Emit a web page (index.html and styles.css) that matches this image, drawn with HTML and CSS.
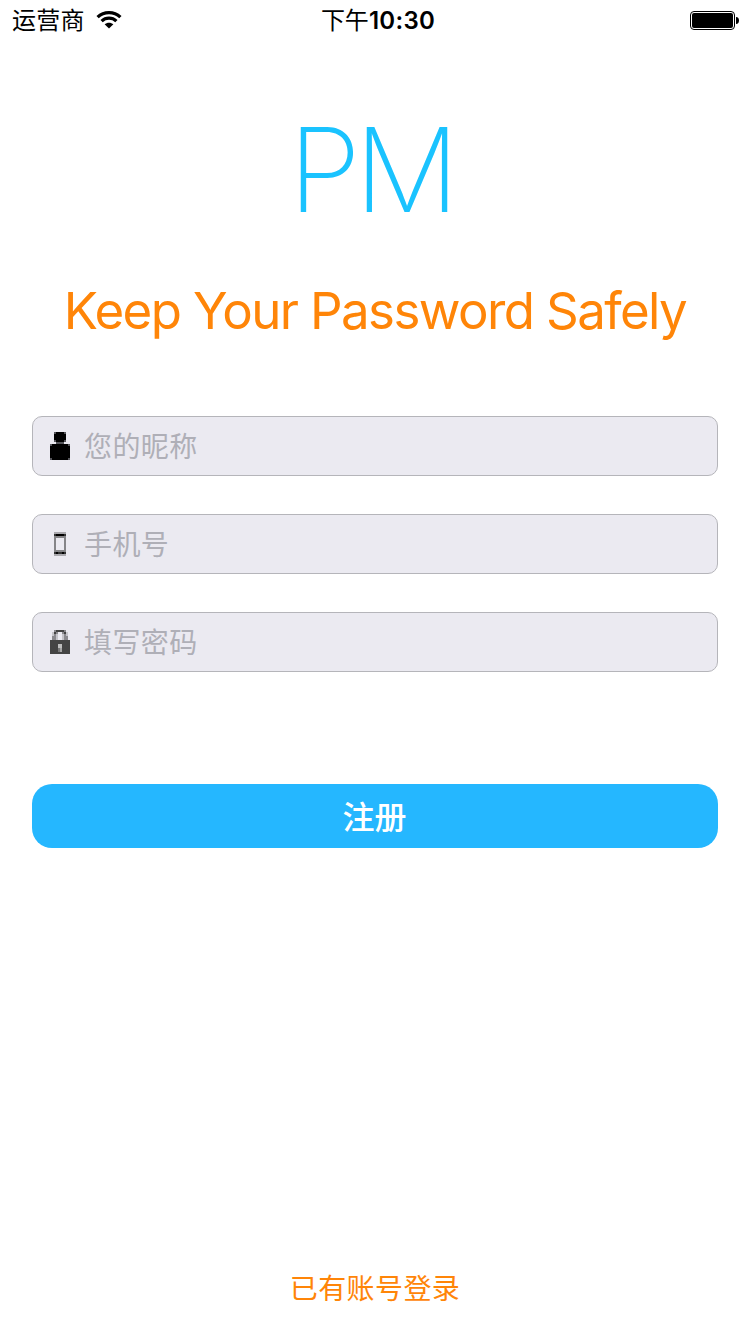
FILE: index.html
```html
<!DOCTYPE html>
<html lang="zh-CN">
<head>
<meta charset="utf-8">
<title>注册</title>
<link rel="stylesheet" href="styles.css">
</head>
<body>
<div class="screen">
  <header class="status">
    <div class="carrier">
      <span>运营商</span>
      <svg class="wifi" width="26" height="20" viewBox="0 0 26 20" fill="none" stroke="#000" stroke-width="3.3">
        <path d="M1.6 7.1C8 1.1 18 1.1 24.4 7.1"/>
        <path d="M5.6 11.1C9.8 7.2 16.2 7.2 20.4 11.1"/>
        <path d="M13 18.6L8.6 14.3C11 12.1 15 12.1 17.4 14.3Z" fill="#000" stroke="none"/>
      </svg>
    </div>
    <div class="clock"><span class="period">下午</span><span class="time">10:30</span></div>
    <svg class="battery" width="49" height="19" viewBox="0 0 49 19">
      <rect x=".5" y=".5" width="44" height="18" rx="3.5" fill="none" stroke="#000"/>
      <rect x="2" y="2" width="41" height="15" rx="2"/>
      <path d="M46 6C48.2 6 49 7.6 49 9.5S48.2 13 46 13Z"/>
    </svg>
  </header>
  <h1 class="logo">PM</h1>
  <p class="tagline">Keep Your Password Safely</p>
  <form class="form">
    <label class="field">
      <svg class="icon" width="20" height="28" viewBox="0 0 10 14" shape-rendering="crispEdges">
        <path fill="#55555a" d="M2 0H8V5H2ZM3 5H7V6H3ZM0 6H10V14H0Z"/>
        <path d="M3 0H7V1H8V4H7V5H3V4H2V1H3ZM1 6H9V7H10V13H9V14H1V13H0V7H1Z"/>
      </svg>
      <input class="input" type="text" placeholder="您的昵称">
    </label>
    <label class="field">
      <svg class="icon" width="20" height="24" viewBox="0 0 10 12" shape-rendering="crispEdges">
        <path fill="#858588" d="M2 0H8V12H2Z"/>
        <path fill="#aaa9ae" d="M2 0H8V1H2ZM2 11H8V12H2Z"/>
        <path fill="#ebeaf1" d="M3 3H7V9H3Z"/>
        <path fill="#000" d="M3 1H7V2H3ZM3 10H4V11H3ZM6 10H7V11H6Z"/>
        <path fill="#333" d="M2 1H3V2H2ZM7 1H8V2H7ZM2 10H3V11H2ZM4 10H6V11H4ZM7 10H8V11H7Z"/>
      </svg>
      <input class="input" type="tel" placeholder="手机号">
    </label>
    <label class="field">
      <svg class="icon" width="20" height="24" viewBox="0 0 10 12" shape-rendering="crispEdges">
        <path fill="#8a898e" d="M2 0H8V1H9V5H7V2H6V1H4V2H3V5H1V1H2Z"/>
        <path fill="#c5c4ca" d="M1 1H2V3H1ZM8 1H9V3H8ZM3 2H4V5H3ZM6 2H7V5H6Z"/>
        <path fill="#444" d="M3 0H7V1H3ZM2 1H3V2H2ZM7 1H8V2H7ZM0 5H10V12H0Z"/>
        <path fill="#bdbdbd" d="M4 7H6V9H4Z"/>
        <path fill="#777" d="M4 9H5V11H4Z"/>
        <path fill="#a5a5a5" d="M5 9H6V11H5Z"/>
      </svg>
      <input class="input" type="password" placeholder="填写密码">
    </label>
    <button class="submit" type="button">注册</button>
  </form>
  <a class="login">已有账号登录</a>
</div>
</body>
</html>
```
FILE: styles.css
```css
* { box-sizing: border-box; }
body {
  margin: 0;
  background: #fff;
  font-family: Inter, "Noto Sans CJK SC", sans-serif;
}
.screen {
  width: 750px;
  height: 1334px;
  display: flex;
  flex-direction: column;
  align-items: center;
}
.status {
  width: 100%;
  height: 40px;
  padding: 0 11px 0 12px;
  display: grid;
  grid-template-columns: 1fr auto 1fr;
  align-items: center;
  font-size: 24px;
  line-height: 40px;
  color: #000;
}
.carrier { display: flex; align-items: center; gap: 11px; }
.carrier span { padding-top: 2px; line-height: 38px; letter-spacing: 0.3px; }
.wifi { display: block; }
.clock { display: flex; padding: 2px 0 0 5px; line-height: 38px; }
.time { font-weight: 600; letter-spacing: 0.3px; }
.battery { display: block; justify-self: end; }
.logo {
  margin: 85px 0 0;
  padding-right: 8px;
  height: 90px;
  line-height: 90px;
  font-size: 117px;
  font-weight: 200;
  letter-spacing: -6px;
  color: #1ac3ff;
}
.tagline {
  margin: 65px 0 0;
  height: 62px;
  line-height: 62px;
  font-size: 51px;
  letter-spacing: -1.6px;
  white-space: nowrap;
  color: #ff8508;
}
.form {
  width: 686px;
  margin: 74px 0 0;
  display: flex;
  flex-direction: column;
  gap: 38px;
}
.field {
  height: 60px;
  padding: 0 17px;
  display: flex;
  align-items: center;
  gap: 14px;
  background: #ebeaf1;
  border: 1px solid #b5b5ba;
  border-radius: 10px;
}
.icon { display: block; flex: none; }
.input {
  flex: 1;
  height: 58px;
  padding: 0 0 2px;
  border: 0;
  outline: 0;
  background: none;
  font: 28px/56px "Noto Sans CJK SC", sans-serif;
  letter-spacing: 0.4px;
  color: #000;
}
.input::placeholder { color: #afafb7; opacity: 1; }
.submit {
  height: 64px;
  margin: 74px 0 0;
  padding: 0 1px 3px 0;
  border: 0;
  border-radius: 20px;
  background: #25b7ff;
  color: #fff;
  font: 500 32px/60px "Noto Sans CJK SC", sans-serif;
}
.login {
  margin: auto 0 25px;
  font-size: 28px;
  line-height: 40px;
  letter-spacing: 0.4px;
  color: #ff8508;
}
```
